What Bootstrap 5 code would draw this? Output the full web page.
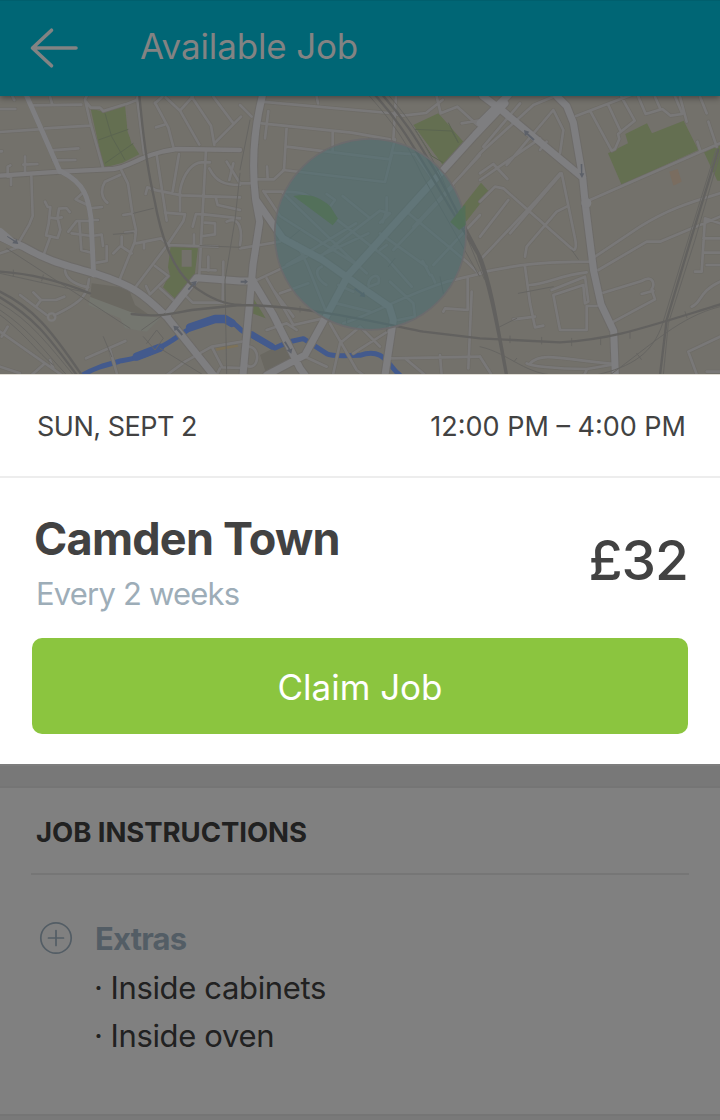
<!DOCTYPE html>
<html lang="en">
<head>
<meta charset="utf-8">
<meta name="viewport" content="width=device-width, initial-scale=1">
<title>Available Job</title>
<link href="https://cdn.jsdelivr.net/npm/bootstrap@5.3.0/dist/css/bootstrap.min.css" rel="stylesheet">
<style>
body{font-family:Inter,"Liberation Sans",sans-serif;background:#808080;color:#424242;width:720px;height:1120px;overflow:hidden}
.txt{white-space:nowrap;line-height:1}
.app-bar{height:96px;background:#006675;border-top:1px solid #005f6d;color:#838383;padding:0 0 5px 29px;box-shadow:0 2px 6px rgba(0,0,0,.4);position:relative;z-index:1}
.app-bar svg{margin-top:4px}
.app-title{font-size:35px;margin-left:60px;letter-spacing:-.15px}
.map{height:278px;background:#73716b;display:block;width:720px}
.sheet{height:390px;border-top:1px solid #e0ddd5}
.when{height:103px;border-bottom:2px solid #ededed;padding:1px 34px 0 37px;font-size:27px}
.when .day{letter-spacing:-.5px}
.job{padding:38px 33px 0 34px}
.town{font-size:45px;font-weight:700;letter-spacing:-.75px}
.every{font-size:31px;color:#9dadb8;letter-spacing:-.8px;margin:17px 0 0 2px}
.price{font-size:55px;font-weight:500;letter-spacing:-1px;margin:17px -1px 0 0}
.claim{height:96px;background:#8bc53f;color:#fff;border-radius:10px;border:0;font-size:35px;margin:29px 32px 0;width:656px;padding:2px 0 0}
.band{height:24px;background:#787878;border-top:2px solid #7d7d7d;border-bottom:2px solid #757575}
.notes{color:#212121;height:326px}
.notes-head{margin:0 31px;height:87px;border-bottom:2px solid #767676;padding:31px 0 0 5px}
.notes-head h2{font-size:27.5px;font-weight:700;margin:0;letter-spacing:-.05px}
.extras-row{padding:46px 0 0 39px}
.extras-name{font-size:31px;color:#535d65;font-weight:700;letter-spacing:-.8px;margin:2px 0 0 22px}
.items{margin:17px 0 0 94px;padding:0;font-size:31px}
.items li{margin-bottom:17px;letter-spacing:-.35px}
.items i{font-style:normal;display:inline-block;width:16.5px}
.end{height:6px;background:#797979;border-top:2px solid #757575}
.map g{stroke-linejoin:round;stroke-linecap:round}
.case-s{stroke:#6e6c67;stroke-width:12}
.fill-s{stroke:#797878;stroke-width:8}
.case-m{stroke:#6c6a66;stroke-width:18}
.fill-m{stroke:#7c7b7c;stroke-width:13}
.case-l{stroke:#6d6b68;stroke-width:27}
.fill-l{stroke:#7e7e80;stroke-width:21}
.rail{stroke:#62615f;stroke-width:7}
.rail-s{stroke:#666562;stroke-width:3}
</style>
</head>
<body>
<header class="app-bar d-flex align-items-center">
<svg width="51" height="42" viewBox="0 0 51 42" fill="none" stroke="currentColor" stroke-width="3.6" stroke-linecap="round" stroke-linejoin="round"><path d="M47 21H4M22.500 3.200 3.500 21l19 17.800"/></svg>
<h1 class="app-title txt mb-0 fw-normal">Available Job</h1>
</header>

<svg class="map" viewBox="0 18 2160 834" preserveAspectRatio="none" fill="none">
<defs>
<g id="streets">
<!-- west -->
<path d="M0 57H46M35 15l8 15M95 46 244 44M150 20l7 24M0 126 115 118M135 115 270 107M260 18l-5 10 16 70 38 136M258 35l14 18H300l10 10 65-20M380 42l30-12 4-12M412 30l20 160M155 181l80-6M160 211l66-1M75 200v48M70 224l42-2M33 285v-25h-10v-30l8-4M94 258l4 120-10 25-32 55M0 184H6"/>
<path d="M360 255l-45 20c-15 25-10 50 7 63M270 355l36-4M270 390l24 0M262 345l-25-12-10-5 20-18M362 236l22 45 14 95 10 45-4 35-48 120M370 375l30-5M375 428l30-4M408 460l75-15 25 22M432 460v15M340 490l20-20M365 440v30l30 20"/>
<path d="M135 335l8 16 8 0-5 50-8 35 35 8 8-25-8-35 12-2M150 383l22 3 5-30 22-2 10 12M150 442l-18 50M205 425l25-32h40M215 430l60 8 30-4 4 34M238 395l6 85 30 8M290 518l30-5v-45"/>
<path d="M465 40l22-20M465 38l40 75 15 58M468 112l25-8M497 22l43 40 58 102M540 62l38-42M575 20l58 87 10 58M643 160l80-80M640 20l60 80M470 195l30 197M537 192l-19 112M455 298l90 18 175 6M437 312l5-20 20 5M540 362v-60c10-55 40-85 65-85h25M495 368l60 5-5 20-48 72-100 132M618 178l-20 375M628 235c20 40 45 50 92 50M700 220l-12 50M612 373l108 12M648 325l5 20 67 15M578 410l10-38 25 2M582 462v-28M615 398l30 2v33l-35 5M503 465l150 5M625 500v42M602 538l45 3M670 515l-2 115M465 528l40 30-55 55-12-25M480 595l45 40M548 608l30 30 90 0M195 542c5 30 40 45 70 50M267 568c-5 45-15 65-105 108M60 615l80 60M100 607l23 23h45l25-10M123 630l-15 20"/>
<path d="M258 805l118-52M330 780l22 75M0 725l185 130M5 740l18-30M0 830l60 20M95 855l40-35M0 490l45-15M500 855l55-40 80-45 90-15M635 770l32 62 60 2M660 835l-10 20M150 810l10 25M680 395c40-20 48 30 40 70M680 215l40 65 30 0"/>
<!-- centre -->
<path d="M720 45 755 80M783 35l385 34 40 8 70-8 50-40M950 20l4 20M1188 18l-8 130M785 100l270 28 115 20M860 110l-8 130-30 28H760M795 145l10-82M803 265l-2-35M860 170l310 38 15-60M998 125v60M850 240l305 36 20-80M1175 188l70 5 50 70M1310 20l12 50 50-20 60 55M1385 100l60-10"/>
<path d="M795 305h50l195 190 60 55M790 303l50 75 220 140M845 305c60 0 80 0 135 60l180 140 75 85M980 312l25 18-15 20M1028 318l80 65M1160 322v40l-12 35M1140 398l30-28-30-8-172 132M1068 400 860 525M1220 365l180 150 30 30M1290 555l-22-42M1140 430l140 100M1105 430l-150 70M1295 555l10 22M840 455l-120 20M890 460l30 60 60 150M965 530c-25 10-12 40 14 55M760 575l160-75M800 565l80 140 90-20M820 600l60 80M840 610l85-30M1060 605l-45-20M1105 585c0-30 40-40 30-5l-28 10M1170 575l70 65 5 40-50 10M1010 640l100 25M1030 700c120-40 170-80 310-125l105-25M1330 665l5-10 68 5V560M1415 605l-10 230M1000 850l20-90 60-50 60 60M1060 790l110-70M990 700l80 140 20 15M915 800l65 30M1170 805l270-5M1320 795l5 60M1215 805l60 50M1240 410 1440 195M1180 480 1360 290M1300 525 1440 375M1380 260l60-70M1140 480l20-15M740 770c50-5 35 90-10 50M800 720l60-20 30 20"/>
<path d="M1440 335l45-45 25 5 210 185c10 0 8-20 5-35l-40-195-155 180M1440 440l85-110M1440 510l170-180 70-80M1440 250l40-28 42 45M1440 190 1600 45 1660 20M1520 225 1660 60 1690 120 1680 190M1440 270l180-125M1640 155l-20 25M1575 500l5-30 90-105 30-15M1450 170l110-130"/>
<!-- east -->
<path d="M1728 78l170-65M1770 62l65 120 10-5 13-30-4-15 50-40-40-72M1825 45l35 75M1915 20l22 52 50-15 25 20 35-5-25-60M1965 20l15 35M2040 20l20 75M2125 95l25 75M2100 20l20 50M1770 330l390-170M2092 155l8 25M1770 510l150-100c80-50 140-70 240-100M1795 540l145-85 40 0 180-75M2160 400l-45-15-10 160h-20M2110 445h50M2110 488h50M2120 525h40M1440 548c120-25 180-32 330-33M1575 530l15 110 15 72 25-5M1590 585c60-5 90-30 170-38M1655 600l100-40 10 75-10 5-5-55-90 30 20 105h80v-72l30 0M1605 680l-65 8M1810 608l115-35c35-20 40 10 30 25l10 30-130 70M1925 612l35-10M2075 650c30-10 20-45 85-75M2160 740l-95 45 35 95M2120 845h40M1440 800l35 55M1590 820c40-40 120-5 260 2l-90 15c-100 0-170-10-180-17M1760 840l-10 20"/>
</g>
<g id="avenues">
<path d="M0 257l180-12 160-8c60-8 80-45 190-60l190 3"/>
</g>
<g id="mains">
<path d="M80 18 180 245M185 245c70 35 80 80 88 140l8 170" stroke-width="15"/>
<path d="M0 440l70 30c60 35 100 50 220 82 110 35 140 60 210 128l140 175M500 675l90-112 130 10 40 0M787 18c-30 120-30 230-20 312l12 65-20 130-30 330M768 330l80 115 120 65 120 85 80 55 12 40-25 165M760 575l60 100 80 160 15 20M800 855l115-60 60-110 70-130 380-420 90-95M1440 100l60-60 25-25M1448 18l60 45 240 200M1670 18l30 30 20 50 28 165 8 80 25 200 22 100 38 80 5 130"/>
</g>
</defs>
<path fill="#6a6861" d="M275 580l110 15 20 50 50 35-50 15-60-40-75-25zM780 795l70-35 45 50-70 45h-25z"/>
<path fill="#74766f" d="M270 620l120 45 90 20-40 40-65-10-15-30-95-40z"/>
<path fill="#646f51" d="M272 56l35 8 68-18 8 80 15 35 20 32-50 25-57 15zM512 467l82 8-10 80-55 75-40-38 20-40-5-20zM757 620l40 65-40-15zM1240 105l75-35 75 85-60 72zM2160 165l-48 22 40 85h8zM1824 190l60-30-8-28 65-32 15 30 95-38 44 88-230 105zM1443 278l25 28-90 115-28-25z"/>
<path fill="#73716b" d="M545 480h30v50h-30zM382 45l28-12 15 125-30 5-12-45z"/>
<path fill="#7a6d60" d="M2008 245l25-8 12 38-25 12z"/>
<path fill="#7d7259" d="M645 770l65-12 5 12-65 12z"/>
<path stroke="#5b6550" stroke-width="3" d="M315 70l20 70 40 70M295 150l90-32M315 220l85-60M1245 118l110 5 20 35-30-60M1245 118l50 80 35 20"/>
<g stroke="#435a8d"><path d="M235 862c50-30 85-38 130-50 70-10 100-30 150-60l60-40 80-26c60 0 50 35 95 48l75 40 40-18 45-10 70 45c20 10 60 5 100 5 70-25 85 30 115 55l30 30" stroke-width="15"/><path d="M410 800l70-27M570 712l75-25 30 0 20 12" stroke-width="25"/><path d="M755 733l60 36" stroke-width="19"/></g>
<g><use href="#streets" class="case-s"/><use href="#avenues" class="case-m"/><use href="#mains" class="case-l"/>
<use href="#streets" class="fill-s"/><use href="#avenues" class="fill-m"/><use href="#mains" class="fill-l"/></g>
<circle cx="155" cy="681" r="11" stroke="#7b7a7a" stroke-width="7"/>
<g><path d="M0 440l50 25M0 425l30 25" stroke="#7e7e80" stroke-width="22"/><circle cx="1759" cy="339" r="15" fill="#7e7e80"/></g>
<g class="rail-s">
<path d="M1108 18c90 100 120 160 160 240l170 300M1168 18c70 80 110 150 160 250l125 300M0 640c90 50 150 130 220 215M0 660c90 60 130 120 200 195M0 675c80 60 110 110 160 150M2148 180l-90 290-70 230c-30 90-90 130-200 155M2160 190l-75 260-80 250-15 155M2160 650c-120 30-200 110-330 205M1440 770c90 20 140 90 240 85M720 250l-15 140-30 180 5 285M0 550l270 60M20 475l370 240M480 775l130 80M720 240l30-150M310 740l25 60M1555 610l105-20M1715 480l20 28M1490 715l60-30M400 370l60-15M340 433l60-5M600 467l120 5M1165 530l20-25M870 445l30-25M1320 560l10 50M425 720l70-50M430 740l35 40 25-35-20-25-30 40"/>
<path d="M40 540v18M130 555l-5 18M900 650v16M1040 685v14M1160 710v14M1530 738v20M1625 742v20M1715 745v22M1802 742v22M1890 725v20M2055 665l6 18M1550 805l-8 10M1910 790l14 18"/>
</g>
<g class="rail">
<path d="M418 18c10 90 15 180 45 310 20 110 50 200 110 255 60 45 100 60 150 62M0 545c80 5 160 20 270 65M395 672c80 10 110 0 180-12l145-15c180 0 400 50 550 80l170 20 240 12c160-10 240-40 485-115"/>
<path d="M1128 18c80 90 110 150 160 230l145 245c30 80 50 170 85 362M1150 18c80 90 110 150 165 240l128 245c30 80 45 170 78 352M0 605c100 50 150 110 245 250M0 622c100 60 140 110 230 233M2155 180l-80 260-75 250-20 165"/>
</g>
<g fill="#5d6169"><path d="M22 438l24 14 3-6 6 16-18-2 4-6-20-14zM590 573l-4 16-5-4-14 16-4-4 15-16-6-4zM520 707l18 3-4 5 15 18-4 4-16-18-5 4zM1572 120l16 5-4 5 20 18-4 4-20-18-5 4zM1742 222h5v28h6l-7 14-8-14h5zM852 757l5-3 14 24 6-3-3 16-14-10 6-3zM1062 598l4-4 22 16 4-5 4 17-17-3 4-6zM722 572h12v-5l10 8-10 8v-5h-12z"/></g>
<ellipse cx="1111" cy="433" rx="287" ry="286.500" fill="#4c6e71" fill-opacity=".58" stroke="#6b6b6d" stroke-width="5"/>
<path fill="#527058" d="M880 318c50-8 75 2 110 30l24 38-16 20zM1388 350l8-5 1 60-19 14-26-23z" fill-opacity=".9"/>
</svg>

<main class="sheet bg-white">
<div class="when d-flex align-items-center justify-content-between">
<span class="txt day">SUN, SEPT 2</span><span class="txt">12:00 PM – 4:00 PM</span>
</div>
<div class="job d-flex justify-content-between">
<div><h2 class="town txt mb-0">Camden Town</h2><p class="every txt">Every 2 weeks</p></div>
<div class="price txt">£32</div>
</div>
<button class="claim btn txt d-block">Claim Job</button>
</main>
<div class="band"></div>
<section class="notes">
<div class="notes-head"><h2 class="txt">JOB INSTRUCTIONS</h2></div>
<div class="extras-row d-flex">
<svg width="34" height="34" viewBox="0 0 34 34" fill="none" stroke="#535d65" stroke-width="1.700" stroke-linecap="round"><circle cx="17" cy="17" r="15.200"/><path d="M17 9.500v15M9.500 17h15"/></svg>
<div class="extras-name txt">Extras</div>
</div>
<ul class="items list-unstyled mb-0"><li class="txt"><i>·</i>Inside cabinets</li><li class="txt"><i>·</i>Inside oven</li></ul>
</section>
<div class="end"></div>
<script src="https://cdn.jsdelivr.net/npm/bootstrap@5.3.0/dist/js/bootstrap.bundle.min.js"></script>
</body>
</html>
